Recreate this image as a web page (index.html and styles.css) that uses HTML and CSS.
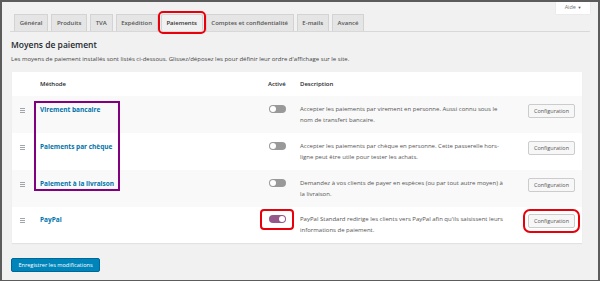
FILE: index.html
```html
<!DOCTYPE html>
<html lang="fr">
<head>
    <meta charset="UTF-8">
    <meta name="viewport" content="width=device-width, initial-scale=1.0">
    <title>Moyens de paiement</title>
    <link rel="stylesheet" href="styles.css">
</head>
<body>
    <div class="screen">
        <div class="help-bar">
            <div class="help-tab">Aide <span class="caret">▼</span></div>
        </div>

        <nav class="tabs">
            <a class="tab">Général</a>
            <a class="tab">Produits</a>
            <a class="tab">TVA</a>
            <a class="tab">Expédition</a>
            <a class="tab active marked">Paiements</a>
            <a class="tab">Comptes et confidentialité</a>
            <a class="tab">E-mails</a>
            <a class="tab">Avancé</a>
        </nav>

        <h2 class="title">Moyens de paiement</h2>
        <p class="intro">Les moyens de paiement installés sont listés ci-dessous. Glissez/déposez les pour définir leur ordre d'affichage sur le site.</p>

        <div class="table-wrap">
            <table class="gateways">
                <colgroup>
                    <col class="c-sort">
                    <col class="c-name">
                    <col class="c-status">
                    <col class="c-desc">
                    <col class="c-action">
                </colgroup>
                <thead>
                    <tr>
                        <th></th>
                        <th>Méthode</th>
                        <th>Activé</th>
                        <th>Description</th>
                        <th></th>
                    </tr>
                </thead>
                <tbody>
                    <tr class="alt">
                        <td class="sort"><span class="handle"></span></td>
                        <td class="name"><a>Virement bancaire</a></td>
                        <td class="status"><span class="toggle"></span></td>
                        <td class="desc">Accepter les paiements par virement en personne. Aussi connu sous le nom de transfert bancaire.</td>
                        <td class="action"><button class="config">Configuration</button></td>
                    </tr>
                    <tr>
                        <td class="sort"><span class="handle"></span></td>
                        <td class="name"><a>Paiements par chèque</a></td>
                        <td class="status"><span class="toggle"></span></td>
                        <td class="desc">Accepter les paiements par chèque en personne. Cette passerelle hors-ligne peut être utile pour tester les achats.</td>
                        <td class="action"><button class="config">Configuration</button></td>
                    </tr>
                    <tr class="alt">
                        <td class="sort"><span class="handle"></span></td>
                        <td class="name"><a>Paiement à la livraison</a></td>
                        <td class="status"><span class="toggle"></span></td>
                        <td class="desc">Demandez à vos clients de payer en espèces (ou par tout autre moyen) à la livraison.</td>
                        <td class="action"><button class="config">Configuration</button></td>
                    </tr>
                    <tr class="last">
                        <td class="sort"><span class="handle"></span></td>
                        <td class="name"><a>PayPal</a></td>
                        <td class="status"><span class="marked-box"><span class="toggle on"></span></span></td>
                        <td class="desc">PayPal Standard redirige les clients vers PayPal afin qu'ils saisissent leurs informations de paiement.</td>
                        <td class="action"><button class="config marked-btn">Configuration</button></td>
                    </tr>
                </tbody>
            </table>
            <div class="purple-box"></div>
        </div>

        <button class="save">Enregistrer les modifications</button>
    </div>
</body>
</html>
```

FILE: styles.css
```css
body {
    margin: 0;
    font-family: "Open Sans", "Noto Sans", sans-serif;
    background: #f1f1f1;
    color: #444;
}

.screen {
    height: 281px;
    box-sizing: border-box;
    border: 2px solid #5c5c5c;
    border-bottom-width: 1px;
    overflow: hidden;
}

.help-bar {
    display: flex;
    justify-content: flex-end;
    padding-right: 8px;
    height: 12px;
}

.help-tab {
    width: 34px;
    background: #fff;
    font-size: 5.5px;
    line-height: 11px;
    color: #777;
    text-align: center;
    box-shadow: 0 0 1px rgba(0, 0, 0, 0.15);
}

.caret {
    font-size: 4px;
    color: #555;
}

.tabs {
    display: flex;
    gap: 3px;
    margin: 0 8px;
    padding-left: 4px;
    height: 17px;
    border-bottom: 1px solid #d8d8d8;
    align-items: flex-end;
}

.tab {
    height: 16px;
    line-height: 16px;
    padding: 0 4.7px;
    background: #e5e5e5;
    border: 1px solid #d3d3d3;
    border-bottom: none;
    font-size: 6px;
    font-weight: 600;
    color: #555;
}

.tab.active {
    background: #f1f1f1;
    color: #333;
}

.marked {
    outline: 2px solid #e8000b;
    outline-offset: 1px;
    border-radius: 2px;
}

.title {
    margin: 7px 0 0 9px;
    font-size: 8.5px;
    line-height: 12px;
    font-weight: 600;
    color: #23282d;
}

.intro {
    margin: 4px 0 0 9px;
    font-size: 6px;
    line-height: 9px;
    color: #444;
}

.table-wrap {
    position: relative;
    margin: 8px 0 0 10px;
    width: 570px;
}

.gateways {
    width: 570px;
    table-layout: fixed;
    border-collapse: collapse;
    background: #fff;
    box-shadow: 0 1px 1px rgba(0, 0, 0, 0.06);
}

.c-sort { width: 20px; }
.c-name { width: 228px; }
.c-status { width: 32px; }
.c-desc { width: 223px; }
.c-action { width: 67px; }

.gateways th {
    height: 24px;
    padding: 0 0 0 8px;
    text-align: left;
    font-size: 6px;
    font-weight: 600;
    color: #23282d;
}

.gateways td {
    height: 37px;
    box-sizing: border-box;
    padding: 8px 0 0 8px;
    vertical-align: top;
    font-size: 6px;
    line-height: 11px;
}

.gateways tr.alt td {
    background: #f9f9f9;
}

.gateways tr.last td {
    height: 36px;
    padding-top: 7px;
}

.gateways td.sort {
    padding-left: 0;
    text-align: center;
    line-height: 0;
}

.handle {
    display: inline-block;
    margin-top: 4px;
    width: 5px;
    height: 5px;
    background: linear-gradient(#a0a5aa 1px, transparent 1px) 0 0 / 5px 2px;
}

td.name a {
    display: block;
    font-size: 6.5px;
    font-weight: 700;
    color: #0073aa;
}

.gateways td.status {
    padding-left: 9px;
    line-height: 0;
}

.toggle {
    display: inline-block;
    vertical-align: top;
    width: 17px;
    height: 8px;
    margin-top: 1px;
    border-radius: 4px;
    background: #999;
    position: relative;
}

.toggle::after {
    content: "";
    position: absolute;
    left: 1px;
    top: 1px;
    width: 6px;
    height: 6px;
    border-radius: 50%;
    background: #fff;
}

.toggle.on {
    background: #96588a;
}

.toggle.on::after {
    left: auto;
    right: 1px;
}

.marked-box {
    display: inline-block;
    vertical-align: top;
    border: 2px solid #e8000b;
    border-radius: 4px;
    padding: 4px 6px 5px 7px;
    margin: -5px 0 0 -9px;
}

.marked-box .toggle {
    margin-top: 0;
}

td.desc {
    padding-right: 10px;
    color: #555;
}

.gateways td.action {
    text-align: right;
    padding-right: 7px;
    line-height: 0;
}

.config {
    width: 47px;
    height: 14px;
    padding: 0;
    background: #f7f7f7;
    border: 1px solid #ccc;
    border-radius: 2px;
    font-family: inherit;
    font-size: 5.5px;
    color: #555;
    vertical-align: top;
}

.marked-btn {
    outline: 2px solid #e8000b;
    outline-offset: 3px;
}

.purple-box {
    position: absolute;
    left: 22px;
    top: 29px;
    width: 86px;
    height: 90px;
    box-sizing: border-box;
    border: 2px solid #800080;
}

.save {
    display: block;
    margin: 15px 0 0 9px;
    width: 89px;
    height: 14px;
    padding: 0;
    background: #0085ba;
    border: 1px solid #006799;
    border-radius: 2px;
    font-family: inherit;
    font-size: 5.6px;
    color: #fff;
}
```
